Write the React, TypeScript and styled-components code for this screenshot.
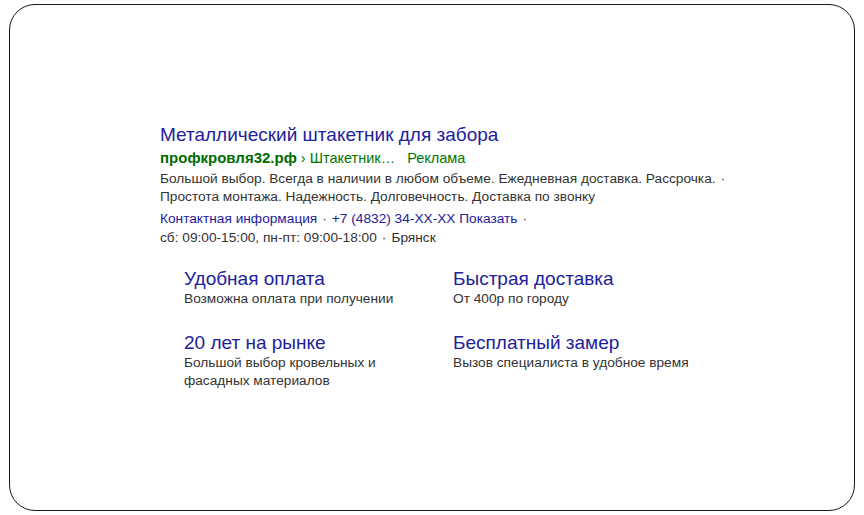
import styled, {createGlobalStyle} from "styled-components";

const GlobalStyle = createGlobalStyle`
    html, body {
        margin: 0;
        padding: 0;
        background: #ffffff;
    }
    body {
        font-family: "Liberation Sans", Arial, sans-serif;
    }
`;

const Frame = styled.div`
    box-sizing: border-box;
    width: 846px;
    height: 507px;
    margin: 4px 0 0 9px;
    border: 1.5px solid #1a1a1a;
    border-radius: 26px;
    padding: 119px 0 0 150px;
`;

const Ad = styled.div`
    display: flex;
    flex-direction: column;
`;

const Title = styled.a`
    font-size: 19px;
    line-height: 22px;
    color: #21219c;
    text-decoration: none;
`;

const UrlLine = styled.div`
    font-size: 14.5px;
    line-height: 18px;
    color: #007700;
    display: flex;
    gap: 4px;
    margin-top: 3px;
`;

const Domain = styled.b`
    font-weight: bold;
    font-size: 15px;
    color: #006b00;
`;

const AdLabel = styled.span`
    margin-left: 8px;
`;

const Text = styled.div<{$gap?: number; $lh?: number}>`
    font-size: 13.7px;
    line-height: ${(p) => p.$lh ?? 18}px;
    color: #333333;
    margin-top: ${(p) => p.$gap ?? 0}px;
`;

const Link = styled.span`
    color: #21219c;
`;

const Dot = styled.span`
    margin: 0 5px;
    color: #333333;
`;

const Sitelinks = styled.div`
    display: grid;
    grid-template-columns: 269px 269px;
    row-gap: 24px;
    margin: 21px 0 0 24px;
`;

const Sitelink = styled.div`
    display: flex;
    flex-direction: column;
`;

const SitelinkTitle = styled.a`
    font-size: 19px;
    line-height: 22px;
    color: #21219c;
    text-decoration: none;
`;

const SitelinkText = styled.div`
    font-size: 13.7px;
    line-height: 18px;
    color: #333333;
    width: 240px;
`;

const sitelinks = [
    {title: "Удобная оплата", text: "Возможна оплата при получении"},
    {title: "Быстрая доставка", text: "От 400р по городу"},
    {title: "20 лет на рынке", text: "Большой выбор кровельных и фасадных материалов"},
    {title: "Бесплатный замер", text: "Вызов специалиста в удобное время"},
];

export default function App() {
    return (
        <>
            <GlobalStyle />
            <Frame>
                <Ad>
                    <Title href="#">Металлический штакетник для забора</Title>
                    <UrlLine>
                        <Domain>профкровля32.рф</Domain>
                        <span>› Штакетник…</span>
                        <AdLabel>Реклама</AdLabel>
                    </UrlLine>
                    <Text $gap={3}>
                        Большой выбор. Всегда в наличии в любом объеме. Ежедневная доставка. Рассрочка.
                        <Dot>·</Dot>
                        <br />
                        Простота монтажа. Надежность. Долговечность. Доставка по звонку
                    </Text>
                    <Text $gap={3} $lh={19}>
                        <Link>Контактная информация</Link>
                        <Dot>·</Dot>
                        <Link>+7 (4832) 34-XX-XX Показать</Link>
                        <Dot>·</Dot>
                        <br />
                        сб: 09:00-15:00, пн-пт: 09:00-18:00
                        <Dot>·</Dot>
                        Брянск
                    </Text>
                </Ad>
                <Sitelinks>
                    {sitelinks.map((s) => (
                        <Sitelink key={s.title}>
                            <SitelinkTitle href="#">{s.title}</SitelinkTitle>
                            <SitelinkText>{s.text}</SitelinkText>
                        </Sitelink>
                    ))}
                </Sitelinks>
            </Frame>
        </>
    );
}
